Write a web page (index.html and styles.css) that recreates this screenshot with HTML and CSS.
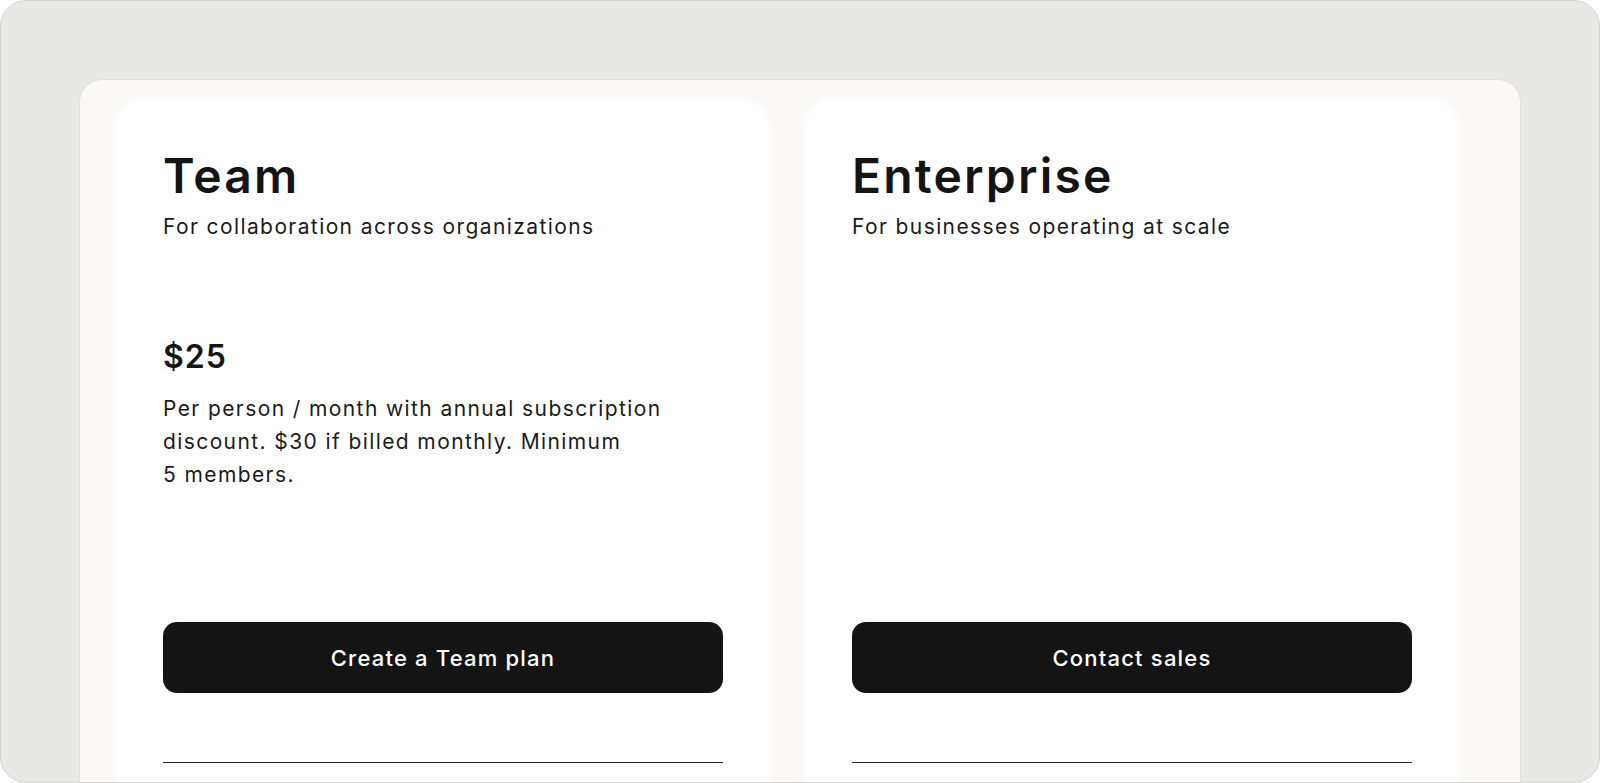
FILE: index.html
```html
<!DOCTYPE html>
<html lang="en">
<head>
<meta charset="utf-8">
<title>Plans</title>
<link rel="stylesheet" href="styles.css">
</head>
<body>
<div class="frame">
  <div class="panel">
    <div class="plans">
      <section class="card">
        <div class="intro">
          <h2 class="plan-name">Team</h2>
          <p class="plan-tagline">For collaboration across organizations</p>
          <div class="price">$25</div>
          <p class="price-note">Per person / month with annual subscription discount. $30 if billed monthly. Minimum 5&nbsp;members.</p>
        </div>
        <button class="cta">Create a Team plan</button>
        <hr class="divider">
      </section>
      <section class="card">
        <div class="intro">
          <h2 class="plan-name">Enterprise</h2>
          <p class="plan-tagline">For businesses operating at scale</p>
        </div>
        <button class="cta">Contact sales</button>
        <hr class="divider">
      </section>
    </div>
  </div>
</div>
</body>
</html>
```

FILE: styles.css
```css
html, body {
  margin: 0;
  padding: 0;
  background: #ffffff;
}

body {
  width: 1600px;
  height: 783px;
  overflow: hidden;
  font-family: "Inter", "Noto Sans", sans-serif;
  color: #151515;
}

.frame {
  box-sizing: border-box;
  width: 1600px;
  height: 783px;
  border: 1px solid #d3d3d1;
  border-radius: 26px;
  background: #e8e8e6;
  padding: 79px 79px 0 79px;
  overflow: hidden;
}

.panel {
  box-sizing: border-box;
  width: 1440px;
  height: 740px;
  background: #faf9f6;
  border-radius: 22px 22px 0 0;
  box-shadow: 0 0 0 1px rgba(0, 0, 0, 0.035);
  padding: 19px 36px 0 36px;
}

.plans {
  display: flex;
  gap: 37px;
}

.card {
  box-sizing: border-box;
  width: 652px;
  height: 720px;
  background: #ffffff;
  border-radius: 30px;
  padding: 48px 45px 0 47px;
  box-shadow: 0 0 10px 2px rgba(255, 255, 255, 0.9);
  display: flex;
  flex-direction: column;
}

.intro {
  height: 475px;
}

.plan-name {
  margin: 0;
  font-size: 48px;
  line-height: 58px;
  font-weight: 600;
  letter-spacing: 2.2px;
  color: #141414;
}

.plan-tagline {
  margin: 8px 0 0 0;
  font-size: 21px;
  line-height: 28px;
  font-weight: 400;
  letter-spacing: 1.4px;
  color: #1b1b1b;
}

.price {
  margin-top: 96px;
  font-size: 32px;
  line-height: 40px;
  font-weight: 600;
  letter-spacing: 1px;
  color: #141414;
}

.price-note {
  margin: 15px 0 0 0;
  width: 515px;
  font-size: 21px;
  line-height: 33px;
  font-weight: 400;
  letter-spacing: 1.4px;
  color: #1b1b1b;
}

.cta {
  box-sizing: border-box;
  width: 560px;
  height: 71px;
  border: none;
  border-radius: 14px;
  background: #141414;
  color: #ffffff;
  font-family: inherit;
  font-size: 22px;
  font-weight: 500;
  letter-spacing: 1.2px;
  cursor: pointer;
}

.divider {
  width: 560px;
  margin: 69px 0 0 0;
  border: none;
  border-top: 1px solid #2a2a2a;
  height: 0;
}
```
